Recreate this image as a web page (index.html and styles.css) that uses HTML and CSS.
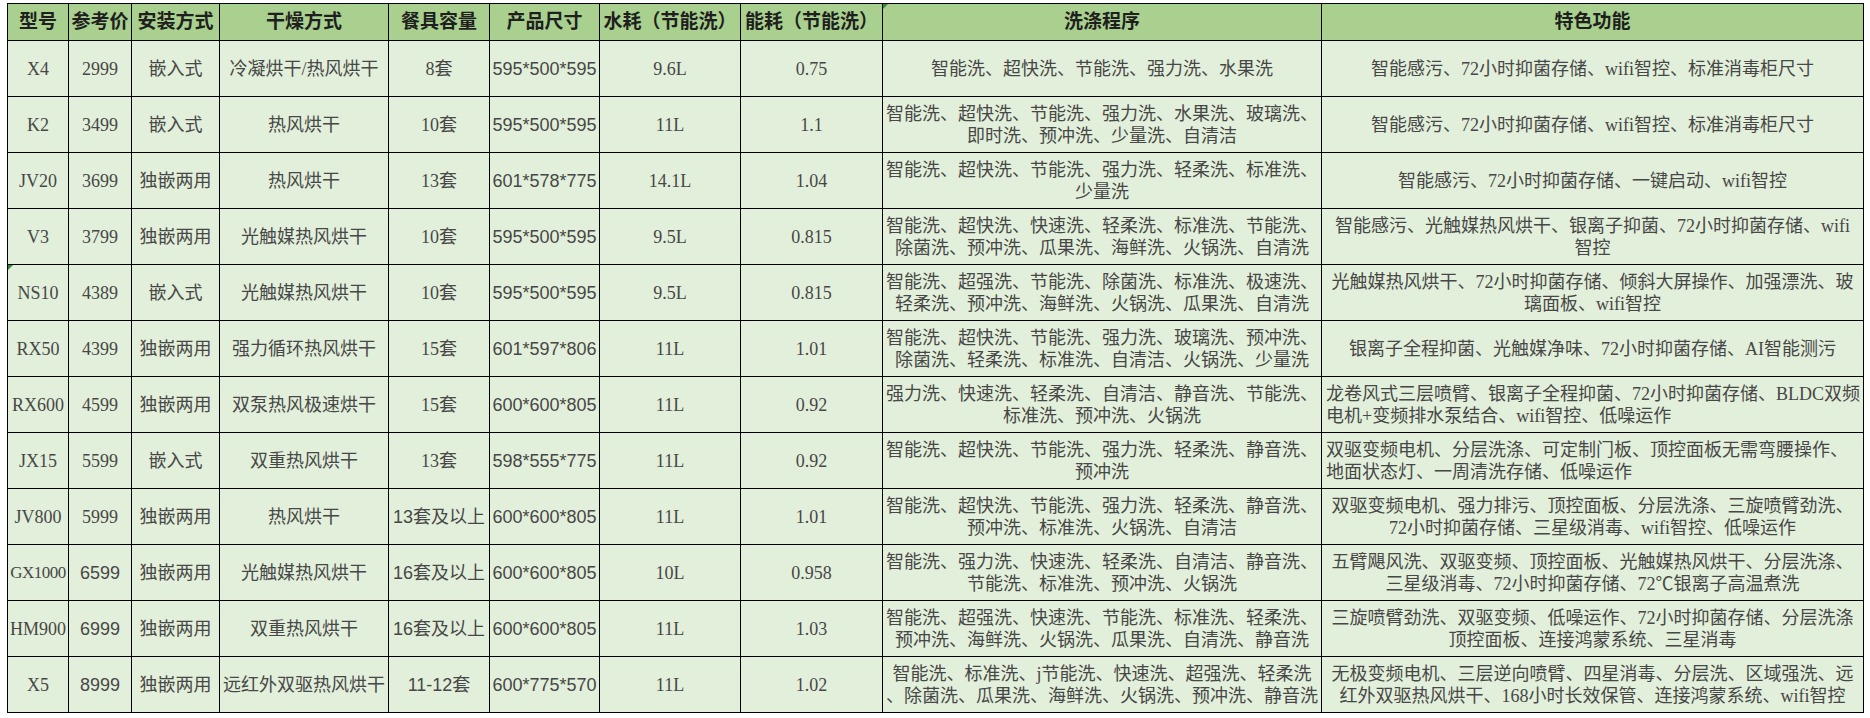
FILE: index.html
```html
<!DOCTYPE html>
<html lang="zh-CN">
<head>
<meta charset="utf-8">
<title>洗碗机参数对比</title>
<link rel="stylesheet" href="styles.css">
</head>
<body>
<div class="sheet">
<table class="grid">
<colgroup>
<col class="c1"><col class="c2"><col class="c3"><col class="c4"><col class="c5"><col class="c6"><col class="c7"><col class="c8"><col class="c9"><col class="c10">
</colgroup>
<thead>
<tr>
<th>型号</th><th>参考价</th><th>安装方式</th><th>干燥方式</th><th>餐具容量</th><th>产品尺寸</th><th>水耗（节能洗）</th><th>能耗（节能洗）</th><th class="mark">洗涤程序</th><th>特色功能</th>
</tr>
</thead>
<tbody>
<tr>
<td>X4</td><td>2999</td><td>嵌入式</td><td>冷凝烘干/热风烘干</td><td>8套</td><td class="sans">595*500*595</td><td>9.6L</td><td>0.75</td>
<td>智能洗、超快洗、节能洗、强力洗、水果洗</td>
<td>智能感污、72小时抑菌存储、wifi智控、标准消毒柜尺寸</td>
</tr>
<tr>
<td>K2</td><td>3499</td><td>嵌入式</td><td>热风烘干</td><td>10套</td><td class="sans">595*500*595</td><td>11L</td><td>1.1</td>
<td>智能洗、超快洗、节能洗、强力洗、水果洗、玻璃洗、<br>即时洗、预冲洗、少量洗、自清洁</td>
<td>智能感污、72小时抑菌存储、wifi智控、标准消毒柜尺寸</td>
</tr>
<tr>
<td>JV20</td><td>3699</td><td>独嵌两用</td><td>热风烘干</td><td>13套</td><td class="sans">601*578*775</td><td>14.1L</td><td>1.04</td>
<td>智能洗、超快洗、节能洗、强力洗、轻柔洗、标准洗、<br>少量洗</td>
<td>智能感污、72小时抑菌存储、一键启动、wifi智控</td>
</tr>
<tr>
<td>V3</td><td>3799</td><td>独嵌两用</td><td>光触媒热风烘干</td><td>10套</td><td class="sans">595*500*595</td><td>9.5L</td><td>0.815</td>
<td>智能洗、超快洗、快速洗、轻柔洗、标准洗、节能洗、<br>除菌洗、预冲洗、瓜果洗、海鲜洗、火锅洗、自清洗</td>
<td>智能感污、光触媒热风烘干、银离子抑菌、72小时抑菌存储、wifi<br>智控</td>
</tr>
<tr>
<td class="mark">NS10</td><td>4389</td><td>嵌入式</td><td>光触媒热风烘干</td><td>10套</td><td class="sans">595*500*595</td><td>9.5L</td><td>0.815</td>
<td>智能洗、超强洗、节能洗、除菌洗、标准洗、极速洗、<br>轻柔洗、预冲洗、海鲜洗、火锅洗、瓜果洗、自清洗</td>
<td>光触媒热风烘干、72小时抑菌存储、倾斜大屏操作、加强漂洗、玻<br>璃面板、wifi智控</td>
</tr>
<tr>
<td>RX50</td><td>4399</td><td>独嵌两用</td><td>强力循环热风烘干</td><td>15套</td><td class="sans">601*597*806</td><td>11L</td><td>1.01</td>
<td>智能洗、超快洗、节能洗、强力洗、玻璃洗、预冲洗、<br>除菌洗、轻柔洗、标准洗、自清洁、火锅洗、少量洗</td>
<td>银离子全程抑菌、光触媒净味、72小时抑菌存储、AI智能测污</td>
</tr>
<tr>
<td>RX600</td><td>4599</td><td>独嵌两用</td><td>双泵热风极速烘干</td><td>15套</td><td class="sans">600*600*805</td><td>11L</td><td>0.92</td>
<td>强力洗、快速洗、轻柔洗、自清洁、静音洗、节能洗、<br>标准洗、预冲洗、火锅洗</td>
<td class="left">龙卷风式三层喷臂、银离子全程抑菌、72小时抑菌存储、BLDC双频<br>电机+变频排水泵结合、wifi智控、低噪运作</td>
</tr>
<tr>
<td>JX15</td><td>5599</td><td>嵌入式</td><td>双重热风烘干</td><td>13套</td><td class="sans">598*555*775</td><td>11L</td><td>0.92</td>
<td>智能洗、超快洗、节能洗、强力洗、轻柔洗、静音洗、<br>预冲洗</td>
<td class="left">双驱变频电机、分层洗涤、可定制门板、顶控面板无需弯腰操作、<br>地面状态灯、一周清洗存储、低噪运作</td>
</tr>
<tr>
<td>JV800</td><td>5999</td><td>独嵌两用</td><td>热风烘干</td><td class="sans">13套及以上</td><td class="sans">600*600*805</td><td>11L</td><td>1.01</td>
<td>智能洗、超快洗、节能洗、强力洗、轻柔洗、静音洗、<br>预冲洗、标准洗、火锅洗、自清洁</td>
<td>双驱变频电机、强力排污、顶控面板、分层洗涤、三旋喷臂劲洗、<br>72小时抑菌存储、三星级消毒、wifi智控、低噪运作</td>
</tr>
<tr>
<td class="tight">GX1000</td><td class="sans">6599</td><td>独嵌两用</td><td>光触媒热风烘干</td><td class="sans">16套及以上</td><td class="sans">600*600*805</td><td>10L</td><td>0.958</td>
<td>智能洗、强力洗、快速洗、轻柔洗、自清洁、静音洗、<br>节能洗、标准洗、预冲洗、火锅洗</td>
<td>五臂飓风洗、双驱变频、顶控面板、光触媒热风烘干、分层洗涤、<br>三星级消毒、72小时抑菌存储、72℃银离子高温煮洗</td>
</tr>
<tr>
<td>HM900</td><td class="sans">6999</td><td>独嵌两用</td><td>双重热风烘干</td><td class="sans">16套及以上</td><td class="sans">600*600*805</td><td>11L</td><td>1.03</td>
<td>智能洗、超强洗、快速洗、节能洗、标准洗、轻柔洗、<br>预冲洗、海鲜洗、火锅洗、瓜果洗、自清洗、静音洗</td>
<td>三旋喷臂劲洗、双驱变频、低噪运作、72小时抑菌存储、分层洗涤<br>顶控面板、连接鸿蒙系统、三星消毒</td>
</tr>
<tr>
<td>X5</td><td class="sans">8999</td><td>独嵌两用</td><td>远红外双驱热风烘干</td><td class="sans">11-12套</td><td class="sans">600*775*570</td><td>11L</td><td>1.02</td>
<td>智能洗、标准洗、j节能洗、快速洗、超强洗、轻柔洗<br>、除菌洗、瓜果洗、海鲜洗、火锅洗、预冲洗、静音洗</td>
<td>无极变频电机、三层逆向喷臂、四星消毒、分层洗、区域强洗、远<br>红外双驱热风烘干、168小时长效保管、连接鸿蒙系统、wifi智控</td>
</tr>
</tbody>
</table>
</div>
</body>
</html>
```
FILE: styles.css
```css
html, body {
  margin: 0;
  padding: 0;
  background: #ffffff;
}

.sheet {
  padding: 3px 0 0 7px;
}

.grid {
  border-collapse: collapse;
  table-layout: fixed;
  width: 1857px;
  font-family: "Liberation Serif", "Noto Sans CJK SC", serif;
  font-size: 18px;
  color: #474747;
}

.c1 { width: 61px; }
.c2 { width: 63px; }
.c3 { width: 88px; }
.c4 { width: 169px; }
.c5 { width: 101px; }
.c6 { width: 110px; }
.c7 { width: 141px; }
.c8 { width: 142px; }
.c9 { width: 439px; }
.c10 { width: 542px; }

.grid th,
.grid td {
  border: 1px solid #000000;
  padding: 0 2px;
  text-align: center;
  vertical-align: middle;
  white-space: nowrap;
  overflow: hidden;
  line-height: 22px;
}

.grid th {
  background: #a9d08e;
  height: 36px;
  font-size: 19px;
  font-weight: 700;
  color: #1f1f1f;
}

.grid td {
  background: #e2efda;
  height: 55px;
}

.grid td.sans {
  font-family: "Liberation Sans", "Noto Sans CJK SC", sans-serif;
}

.grid td.tight {
  padding: 0;
  font-size: 17px;
  letter-spacing: -0.5px;
}

.grid td.left {
  text-align: left;
  padding-left: 4px;
  padding-right: 0;
}

.grid .mark {
  position: relative;
}

.grid .mark::before {
  content: "";
  position: absolute;
  left: 0;
  top: 0;
  border-top: 5px solid #2e8b3a;
  border-right: 5px solid transparent;
}
```
